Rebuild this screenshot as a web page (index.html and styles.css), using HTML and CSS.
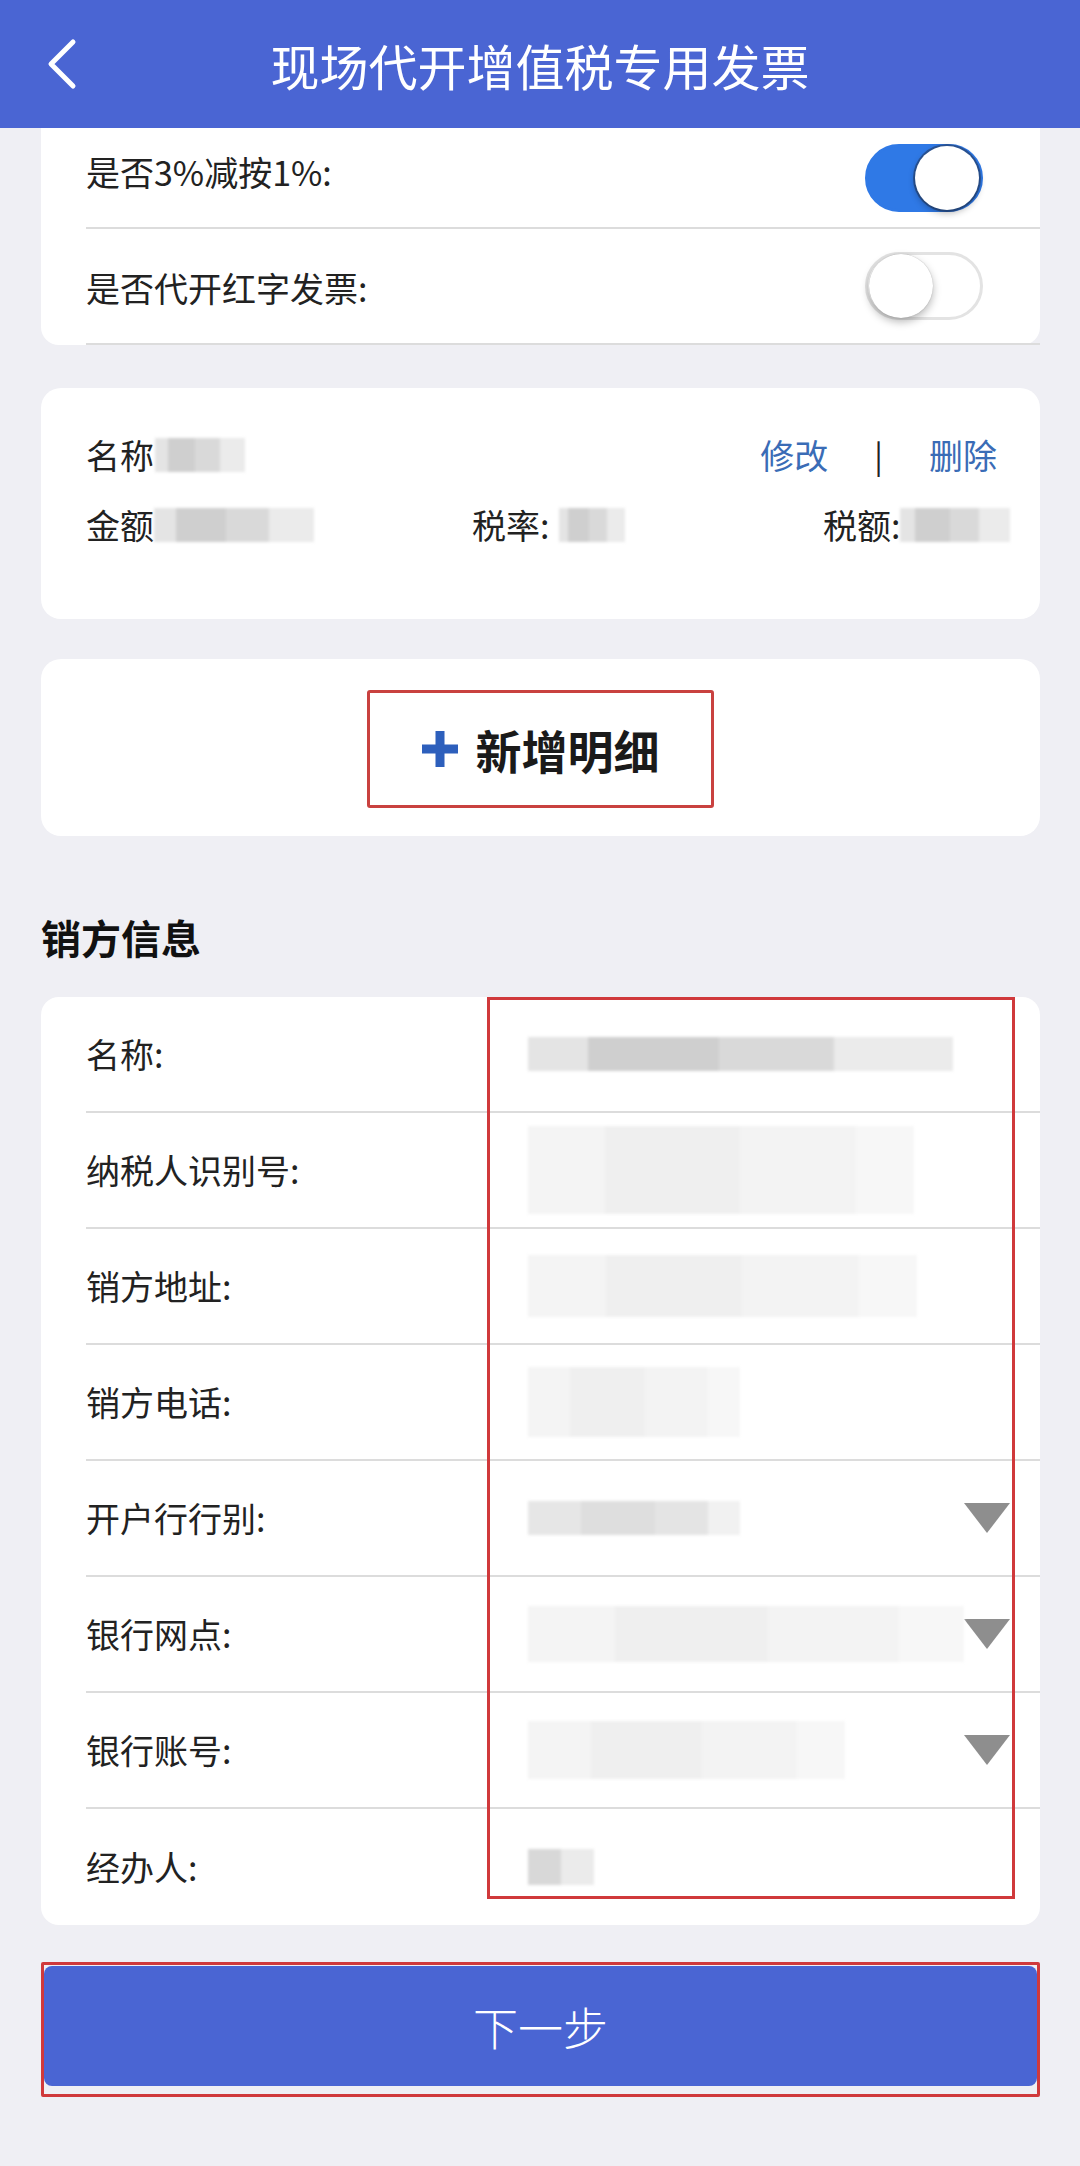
FILE: index.html
```html
<!DOCTYPE html>
<html>
<head>
  <meta charset="utf-8">
  <title>现场代开增值税专用发票</title>
  <link rel="stylesheet" href="styles.css">
</head>
<body>
  <div class="topbar">
    <div class="back">
      <svg width="34" height="52" viewBox="0 0 34 52"><polyline points="29,4 7,26 29,48" fill="none" stroke="#fff" stroke-width="5" stroke-linecap="round" stroke-linejoin="round"/></svg>
    </div>
    <div class="title">现场代开增值税专用发票</div>
    <div class="back"></div>
  </div>

  <div class="page">
    <div class="card card-cut">
      <div class="switch-row first">
        <span class="label">是否3%减按1%:</span>
        <span class="toggle on"><i></i></span>
      </div>
      <div class="switch-row">
        <span class="label">是否代开红字发票:</span>
        <span class="toggle"><i></i></span>
      </div>
    </div>

    <div class="card item">
      <div class="item-top">
        <div class="item-name"><span class="label">名称</span><span class="blot b-name"></span></div>
        <div class="actions"><span>修改</span><span class="sep">|</span><span>删除</span></div>
      </div>
      <div class="item-nums">
        <div><span class="label">金额</span><span class="blot b-amount"></span></div>
        <div><span class="label">税率:</span><span class="blot b-rate"></span></div>
        <div><span class="label">税额:</span><span class="blot b-tax"></span></div>
      </div>
    </div>

    <div class="card add-card">
      <div class="add-btn">
        <svg width="36" height="36" viewBox="0 0 36 36"><rect x="13.5" y="0" width="9" height="36" fill="#2d5fbc"/><rect x="0" y="13.5" width="36" height="9" fill="#2d5fbc"/></svg>
        <span>新增明细</span>
      </div>
    </div>

    <h2 class="section-title">销方信息</h2>

    <div class="card form">
      <div class="form-row"><span class="label">名称:</span><span class="blot v-name"></span></div>
      <div class="form-row"><span class="label">纳税人识别号:</span><span class="blot faint v-taxno"></span></div>
      <div class="form-row"><span class="label">销方地址:</span><span class="blot faint v-addr"></span></div>
      <div class="form-row"><span class="label">销方电话:</span><span class="blot faint v-phone"></span></div>
      <div class="form-row"><span class="label">开户行行别:</span><span class="blot v-banktype"></span><span class="caret"></span></div>
      <div class="form-row"><span class="label">银行网点:</span><span class="blot faint v-branch"></span><span class="caret"></span></div>
      <div class="form-row"><span class="label">银行账号:</span><span class="blot faint v-account"></span><span class="caret"></span></div>
      <div class="form-row last"><span class="label">经办人:</span><span class="blot v-agent"></span></div>
      <div class="mark-box"></div>
    </div>

    <div class="next-wrap">
      <button class="next">下一步</button>
    </div>
  </div>
</body>
</html>
```

FILE: styles.css
```css
body { margin: 0; background: #efeff4; font-family: "Noto Sans CJK SC", "Noto Sans", sans-serif; color: #222; }

.topbar { height: 128px; background: #4a65d3; display: flex; align-items: center; color: #fff; }
.back { width: 110px; display: flex; align-items: center; padding-left: 44px; box-sizing: border-box; }
.title { flex: 1; text-align: center; font-size: 49px; line-height: 1; }

.page { padding: 0 40px 0 41px; }
.card { background: #fff; border-radius: 20px; }
.label { font-size: 34px; line-height: 1; white-space: nowrap; }

/* toggles card, top is scrolled under the bar */
.card-cut { border-radius: 0 0 18px 18px; padding-left: 45px; }
.switch-row { height: 116px; display: flex; align-items: center; justify-content: space-between; padding-right: 57px; border-bottom: 2px solid #dcdcdc; box-sizing: border-box; }
.switch-row.first { height: 101px; }
.switch-row .label { position: relative; top: 2px; }
.switch-row.first .label { top: -6px; }
.toggle { width: 118px; height: 68px; border-radius: 34px; box-sizing: border-box; border: 3px solid #e3e3e3; background: #fff; display: flex; align-items: center; padding: 0 1px; }
.toggle i { width: 64px; height: 64px; border-radius: 50%; background: #fff; box-shadow: 0 4px 8px rgba(0,0,0,0.28), 0 0 1px rgba(0,0,0,0.3); }
.toggle.on { background: #2f79e6; border-color: #2f79e6; justify-content: flex-end; }
.toggle.on i { box-shadow: 0 3px 7px rgba(0,0,0,0.3), 0 0 0 2px #2a5598; }

/* item card */
.item { margin-top: 43px; height: 231px; padding: 0 43px 0 45px; box-sizing: border-box; }
.item-top { display: flex; justify-content: space-between; align-items: center; padding-top: 50px; }
.item-name, .item-nums > div { display: flex; align-items: center; }
.actions { color: #3a6cb6; font-size: 34px; line-height: 1; display: flex; gap: 46px; }
.actions .sep { color: #222; font-size: 32px; }
.item-nums { display: grid; grid-template-columns: 386px 351px 1fr; margin-top: 36px; }

/* pixelated, blurred values */
.blot { display: inline-block; height: 34px; filter: blur(1.5px);
  background: linear-gradient(90deg, #e4e4e4 0 14%, #cfcfcf 14% 45%, #d9d9d9 45% 72%, #ebebeb 72% 100%); }
.blot.faint { background: linear-gradient(90deg, #f4f4f4 0 20%, #efefef 20% 55%, #f3f3f3 55% 85%, #f7f7f7 85% 100%); }
.b-name { width: 90px; margin-left: 1px; }
.b-amount { width: 160px; }
.b-rate { width: 66px; margin-left: 10px; }
.b-tax { width: 110px; }

/* add detail */
.add-card { margin-top: 40px; height: 177px; display: flex; justify-content: center; align-items: center; }
.add-btn { width: 347px; height: 118px; border: 3px solid #c9413f; border-radius: 3px; box-sizing: border-box; display: flex; align-items: center; justify-content: center; gap: 18px; font-size: 46px; font-weight: bold; color: #1a1a1a; margin-top: 2px; }

.section-title { margin: 0; height: 161px; padding-top: 40px; box-sizing: border-box; display: flex; align-items: center; font-size: 40px; font-weight: bold; color: #111; }

/* seller form */
.form { position: relative; padding-left: 45px; border-radius: 18px; }
.form-row { height: 116px; display: flex; align-items: center; border-bottom: 2px solid #dcdcdc; box-sizing: border-box; }
.form-row.last { border-bottom: none; }
.form-row .label { width: 442px; flex-shrink: 0; }
.caret { width: 0; height: 0; border-left: 23px solid transparent; border-right: 23px solid transparent; border-top: 30px solid #8e8e8e; margin-left: auto; margin-right: 30px; }
.v-name { width: 425px; }
.v-taxno { width: 386px; height: 88px; }
.v-addr { width: 389px; height: 62px; }
.v-phone { width: 212px; height: 70px; }
.v-banktype { width: 212px; background: linear-gradient(90deg, #e6e6e6 0 25%, #dedede 25% 60%, #e4e4e4 60% 85%, #f1f1f1 85% 100%); }
.v-branch { width: 436px; height: 56px; background: linear-gradient(90deg, #e3e3e3 0 12%, #f1f1f1 12% 80%, #e6e6e6 80% 97%, #bdbdbd 97% 100%); }
.v-account { width: 317px; height: 58px; }
.v-agent { width: 66px; height: 36px; background: linear-gradient(90deg, #d8d8d8 0 50%, #ebebeb 50% 100%); }

/* red annotation over the value column */
.mark-box { position: absolute; left: 446px; top: 0; width: 528px; height: 902px; border: 3px solid #d0393b; box-sizing: border-box; pointer-events: none; }

.next-wrap { margin-top: 37px; border: 3px solid #d0393b; padding: 1px 0 8px; border-radius: 2px; }
.next { display: block; width: 100%; height: 120px; border: none; border-radius: 8px; background: #4a65d3; color: #fff; font-size: 45px; font-family: inherit; font-weight: 300; }
```
